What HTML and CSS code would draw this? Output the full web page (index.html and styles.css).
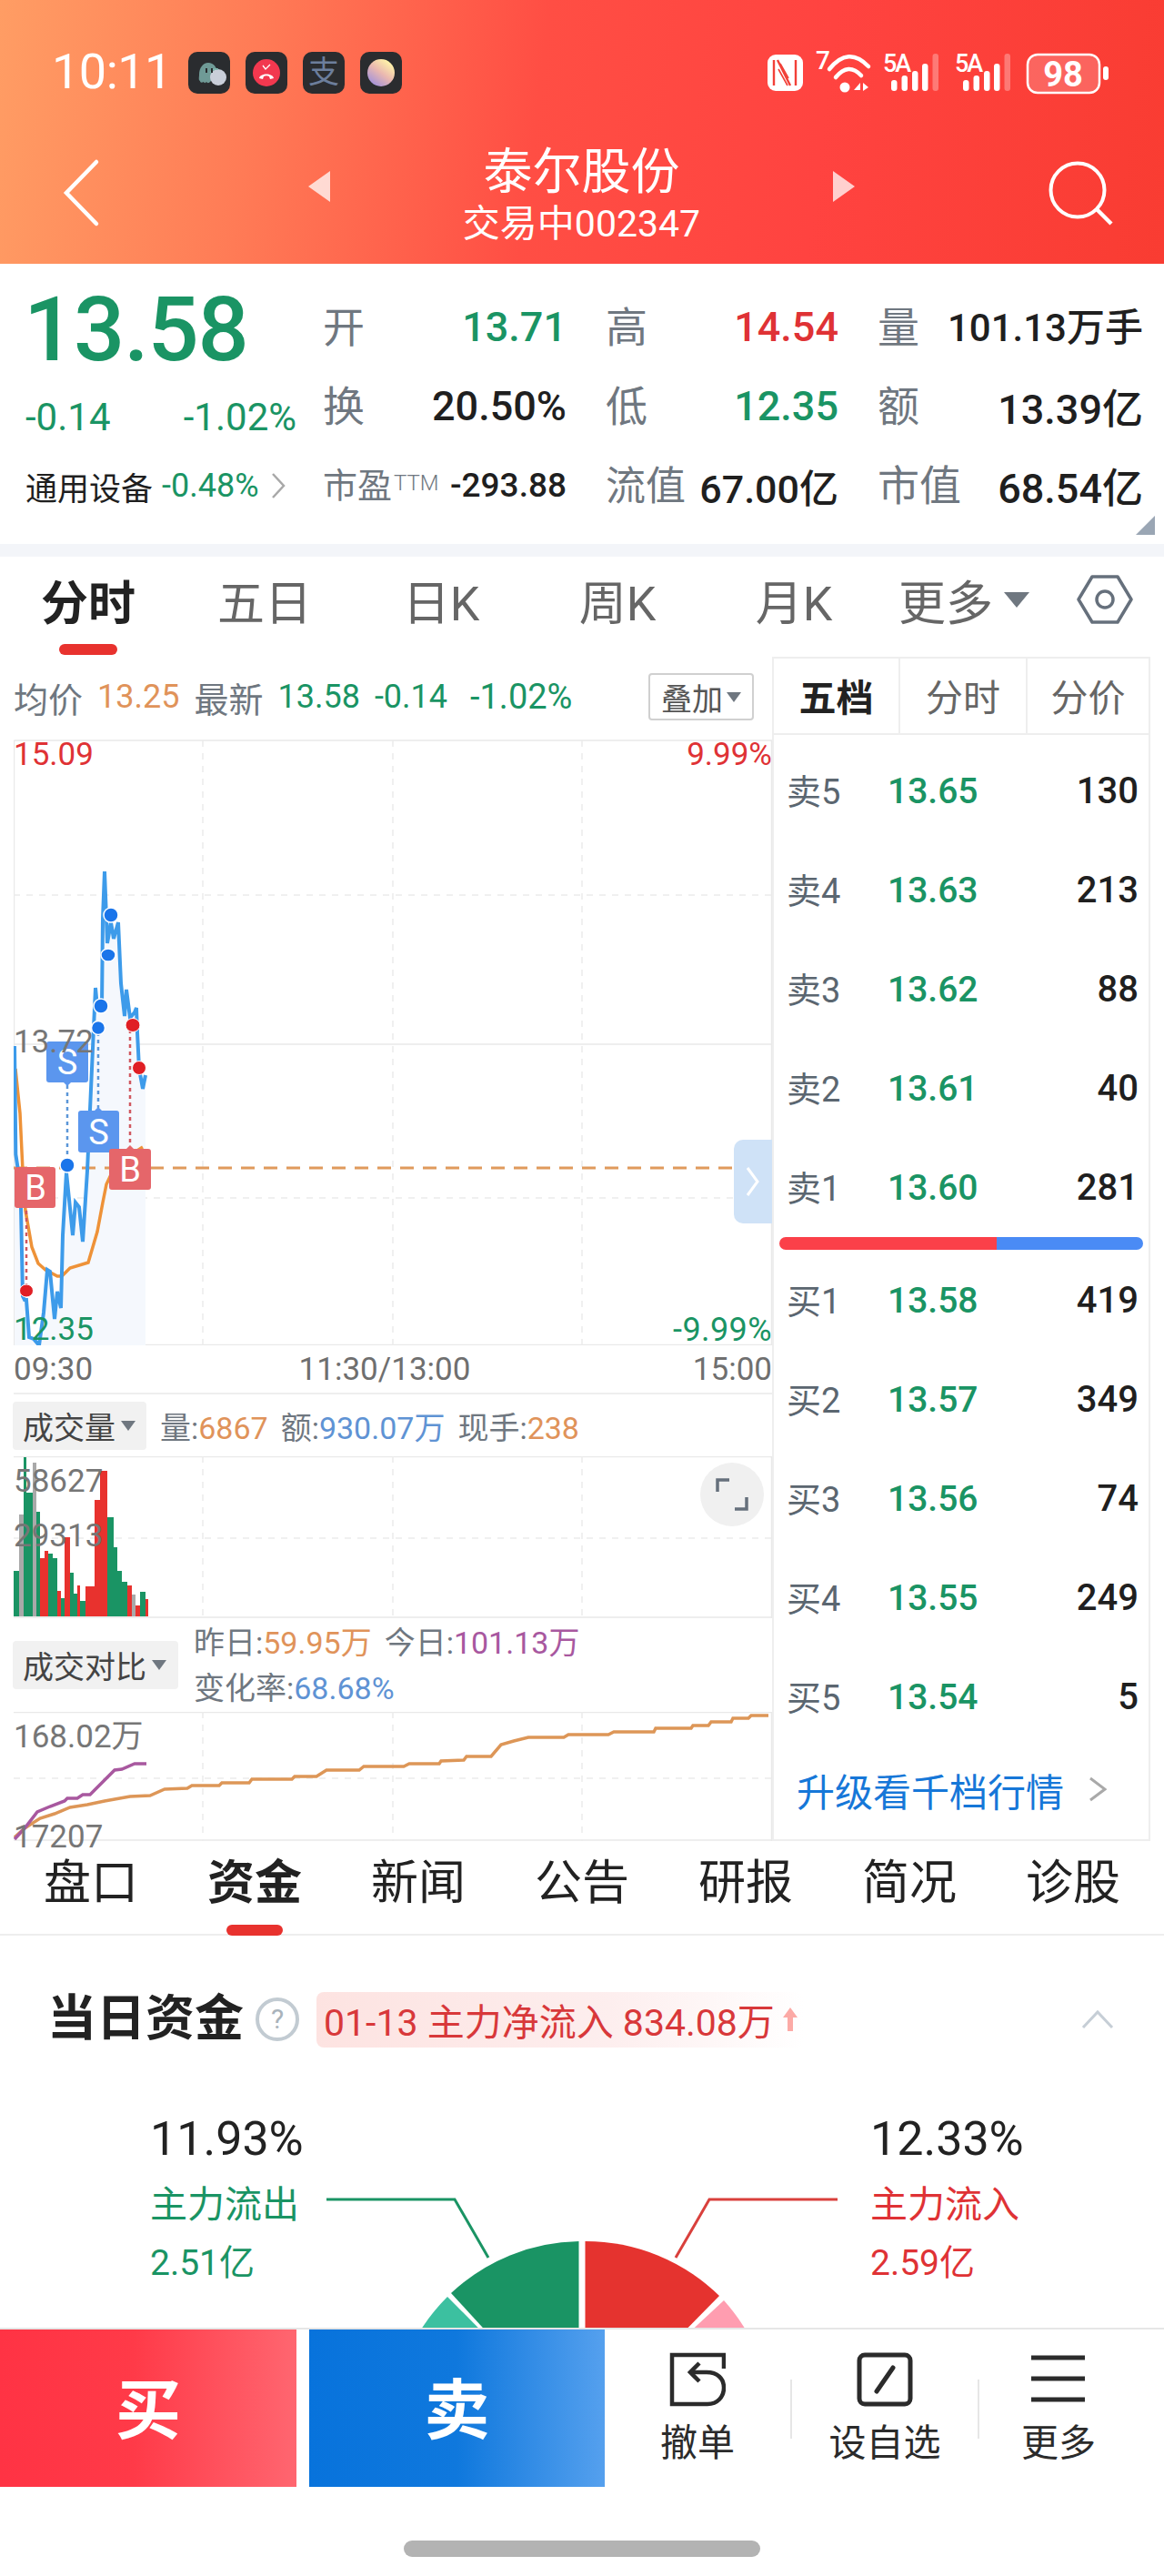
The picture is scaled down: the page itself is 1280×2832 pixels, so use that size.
FILE: index.html
```html
<!DOCTYPE html>
<html lang="zh-CN">
<head>
<meta charset="utf-8">
<title>泰尔股份</title>
<link rel="stylesheet" href="styles.css">
</head>
<body>
<div class="app">
  <header class="top">
    <div class="status">
      <span class="clock">10:11</span>
      <div class="notif">
        <span class="app-icon">
          <svg viewBox="0 0 46 46" width="46" height="46"><path d="M24 33c-2 2-3 1-4 0-1 1-2 2-3 0-2 1-4 1-4-1-2-1-1-4-1-7 0-7 4-13 10-13s10 5 10 12z" fill="#6f9a96"/><circle cx="33" cy="28" r="9" fill="#c9ced9"/><path d="M24 23a9 9 0 0 1 9-4" fill="none" stroke="#7fb8ae" stroke-width="1.5"/><rect x="19" y="18" width="2" height="5" fill="#2a2c2f"/><rect x="25" y="18" width="2" height="5" fill="#2a2c2f"/></svg>
        </span>
        <span class="app-icon">
          <svg viewBox="0 0 46 46" width="46" height="46"><circle cx="23" cy="23" r="15" fill="#f2384f"/><path d="M15 29c1-6 15-6 16 0l-4 1-1-3c-2-1-4-1-6 0l-1 3z" fill="#fff"/><path d="M19 15l3 4 5-5" fill="none" stroke="#fff" stroke-width="1.3"/></svg>
        </span>
        <span class="app-icon app-zhi">支</span>
        <span class="app-icon">
          <svg viewBox="0 0 46 46" width="46" height="46"><defs><linearGradient id="orb" x1="0.2" y1="0.9" x2="0.8" y2="0.1"><stop offset="0" stop-color="#a794d8"/><stop offset="0.5" stop-color="#eab8b0"/><stop offset="1" stop-color="#fff3a8"/></linearGradient></defs><circle cx="23" cy="23" r="15" fill="url(#orb)"/></svg>
        </span>
      </div>
      <svg class="sys" viewBox="840 50 385 60" width="385" height="60">
        <rect x="844" y="60" width="39" height="40" rx="9" fill="#fff"/>
        <path d="M851 66v28M875 66v28M855 66l14 28" fill="none" stroke="#f24038" stroke-width="2.4"/>
        <path d="M856 76l10 18M858 70l9 16" fill="none" stroke="#f24038" stroke-width="1.6"/>
        <text x="897" y="76" class="sys-t sys-7">7</text>
        <path d="M912 76Q933 50 955 73M919 85Q933 68 947 83" fill="none" stroke="#fff" stroke-width="4.5" stroke-linecap="round"/>
        <circle cx="929" cy="96" r="5.5" fill="#fff"/>
        <path d="M946 91l-7 8h7zM949 91v9l6-4z" fill="#fff"/>
        <text x="971" y="79" class="sys-t">5A</text>
        <rect x="980" y="88" width="6.5" height="12" rx="3" fill="#fff"/>
        <rect x="991.5" y="83" width="6.5" height="17" rx="3" fill="#fff"/>
        <rect x="1003" y="78" width="6.5" height="22" rx="3" fill="#fff"/>
        <rect x="1014" y="70" width="6.5" height="30" rx="3" fill="#fff"/>
        <rect x="1025.500" y="59" width="6.500" height="41" rx="3" fill="#fff" fill-opacity=".3"/>
        <g transform="translate(79 0)">
          <text x="971" y="79" class="sys-t">5A</text>
          <rect x="980" y="88" width="6.5" height="12" rx="3" fill="#fff"/>
          <rect x="991.5" y="83" width="6.5" height="17" rx="3" fill="#fff"/>
          <rect x="1003" y="78" width="6.5" height="22" rx="3" fill="#fff"/>
          <rect x="1014" y="70" width="6.5" height="30" rx="3" fill="#fff"/>
          <rect x="1025.500" y="59" width="6.500" height="41" rx="3" fill="#fff" fill-opacity=".3"/>
        </g>
        <rect x="1130" y="60" width="79" height="42" rx="11" fill="#fff" fill-opacity=".2" stroke="#fff" stroke-width="2.5"/>
        <text x="1169" y="95" class="sys-batt" text-anchor="middle">98</text>
        <rect x="1213" y="73" width="6" height="15" rx="3" fill="#fff"/>
      </svg>
    </div>
    <nav class="nav">
      <div class="nav-back">
        <svg viewBox="0 0 44 76" width="44" height="76"><path d="M37 4L4 38l33 34" fill="none" stroke="#fff" stroke-width="4.500" stroke-linecap="round" stroke-linejoin="miter"/></svg>
      </div>
      <svg class="tri" viewBox="0 0 24 34" width="24" height="34"><path d="M24 0v34L0 17z" fill="#fff" fill-opacity=".75"/></svg>
      <div class="nav-title">
        <span class="nav-name">泰尔股份</span>
        <span class="nav-code">交易中002347</span>
      </div>
      <svg class="tri" viewBox="0 0 24 34" width="24" height="34"><path d="M0 0v34l24-17z" fill="#fff" fill-opacity=".75"/></svg>
      <div class="nav-search">
        <svg viewBox="0 0 72 72" width="72" height="72"><circle cx="32" cy="32" r="29.500" fill="none" stroke="#fff" stroke-width="4"/><path d="M53 53l16 16" stroke="#fff" stroke-width="4.500" stroke-linecap="butt"/></svg>
      </div>
    </nav>
  </header>

  <section class="quote">
    <div class="q-left">
      <div class="q-price">13.58</div>
      <div class="q-change"><span>-0.14</span><span>-1.02%</span></div>
      <div class="q-ind"><span class="q-ind-name">通用设备</span><span class="q-ind-pct">-0.48%</span>
        <svg viewBox="0 0 18 30" width="18" height="30"><path d="M3 2l12 13L3 28" fill="none" stroke="#a8a8a8" stroke-width="2.500"/></svg>
      </div>
    </div>
    <div class="q-grid">
      <div class="q-cell"><span class="lbl">开</span><span class="val green">13.71</span></div>
      <div class="q-cell"><span class="lbl">高</span><span class="val red">14.54</span></div>
      <div class="q-cell"><span class="lbl">量</span><span class="val val-sm">101.13万手</span></div>
      <div class="q-cell"><span class="lbl">换</span><span class="val">20.50%</span></div>
      <div class="q-cell"><span class="lbl">低</span><span class="val green">12.35</span></div>
      <div class="q-cell"><span class="lbl">额</span><span class="val">13.39亿</span></div>
      <div class="q-cell"><span class="lbl lbl-sm">市盈<sup class="ttm">TTM</sup></span><span class="val val-xs">-293.88</span></div>
      <div class="q-cell"><span class="lbl lbl-md">流值</span><span class="val val-md">67.00亿</span></div>
      <div class="q-cell"><span class="lbl">市值</span><span class="val">68.54亿</span></div>
    </div>
    <svg class="q-corner" viewBox="0 0 21 21" width="21" height="21"><path d="M21 0v21H0z" fill="#9aa6b4"/></svg>
  </section>

  <div class="tabs">
    <span class="tab tab-on">分时</span>
    <span class="tab">五日</span>
    <span class="tab">日K</span>
    <span class="tab">周K</span>
    <span class="tab">月K</span>
    <span class="tab tab-more">更多<i class="caret"></i></span>
    <span class="tab">
      <svg viewBox="0 0 62 56" width="62" height="56"><path d="M17 3h28l15 25-15 25H17L2 28z" fill="none" stroke="#66707c" stroke-width="3.500" stroke-linejoin="round"/><circle cx="31" cy="28" r="9" fill="none" stroke="#66707c" stroke-width="3.500"/></svg>
    </span>
  </div>

  <div class="market">
    <div class="m-left">
      <div class="info">
        <span class="c-lbl">均价</span><span class="c-org info-num">13.25</span>
        <span class="c-lbl">最新</span><span class="green info-num">13.58</span>
        <span class="green info-num">-0.14</span><span class="green info-pct">-1.02%</span>
        <span class="overlay">叠加<i class="caret caret-sm"></i></span>
      </div>

      <div class="chart">
        <svg class="chart-svg" viewBox="15 812 834 667" width="834" height="667">
          <path d="M15.500 814H849M15.500 814V1479M15 1478.500H849M848.500 814V1479M15 1148H849" fill="none" stroke="#e9e9e9" stroke-width="1.500"/>
          <path d="M223 814V1479M432 814V1479M640 814V1479M15 984H849M15 1317H849" fill="none" stroke="#ececec" stroke-width="1.500" stroke-dasharray="7 7"/>
          <path d="M16 1150L17.300 1269 20 1287 23 1327 25 1425 27 1429 29 1429 32 1470 37 1472 43 1479 48 1443 52 1396 55 1398 60 1450 63 1420 67 1438 69 1358 73 1289 80 1358 83 1322 87 1327 91 1365 96 1287 99 1220 103 1130 105 1086 107 1108 112 1106 113 1010 115 958 117 1010 118 1037 122 1014 125 1032 130 1014 133 1081 137 1117 139 1088 143 1119 148 1113 150 1108 151 1135 153 1175 157 1197 160 1182V1479H16z" fill="#f5f8fd"/>
          <path d="M15 1284H849" stroke="#e09a5c" stroke-width="3" stroke-dasharray="15 10"/>
          <polyline points="17,1175 22,1224 25,1287 28,1331 35,1371 42,1389 50,1396 63,1403 68,1403 77,1394 97,1388 107,1354 113,1322 117,1302 125,1285 140,1272 157,1261" fill="none" stroke="#ee9238" stroke-width="3.500"/>
          <polyline points="16,1150 17.300,1269 20,1287 23,1327 25,1425 27,1429 29,1429 32,1470 37,1472 43,1479 48,1443 52,1396 55,1398 60,1450 63,1420 67,1438 69,1358 73,1289 80,1358 83,1322 87,1327 91,1365 96,1287 99,1220 103,1130 105,1086 107,1108 112,1106 113,1010 115,958 117,1010 118,1037 122,1014 125,1032 130,1014 133,1081 137,1117 139,1088 143,1119 148,1113 150,1108 151,1135 153,1175 157,1197 160,1182" fill="none" stroke="#3d9bea" stroke-width="4"/>
          <path d="M74 1193V1275M108 1135V1218" stroke="#5b96d8" stroke-width="2.500" stroke-dasharray="4 4"/>
          <path d="M143 1132V1260M29 1331V1412" stroke="#d0575f" stroke-width="2.500" stroke-dasharray="4 4"/>
          <g fill="#1a75ea" stroke="#fff" stroke-width="1.500">
            <ellipse cx="122" cy="1006" rx="8" ry="8"/><ellipse cx="119" cy="1050" rx="8" ry="7"/><ellipse cx="111" cy="1106" rx="8" ry="8"/><ellipse cx="108" cy="1130" rx="7.500" ry="7.500"/><ellipse cx="74" cy="1281" rx="8" ry="8"/>
          </g>
          <g fill="#e01f25" stroke="#fff" stroke-width="1">
            <ellipse cx="146" cy="1127" rx="8" ry="7.500"/><ellipse cx="153" cy="1174" rx="7.500" ry="7.500"/><ellipse cx="29" cy="1419" rx="7.500" ry="7"/>
          </g>
          <path d="M54 1145H94a3 3 0 0 1 3 3V1187a3 3 0 0 1-3 3H78l-4 4-4-4H54a3 3 0 0 1-3-3V1148a3 3 0 0 1 3-3z" fill="#5b96ee"/>
          <path d="M89 1221H104l4-4 4 4H128a3 3 0 0 1 3 3V1264a3 3 0 0 1-3 3H89a3 3 0 0 1-3-3V1224a3 3 0 0 1 3-3z" fill="#5b96ee"/>
          <rect x="16" y="1283" width="45" height="45" rx="3" fill="#e5666a"/>
          <path d="M123 1263H139l4-4 4 4H163a3 3 0 0 1 3 3V1305a3 3 0 0 1-3 3H123a3 3 0 0 1-3-3V1266a3 3 0 0 1 3-3z" fill="#e5666a"/>
          <text x="74" y="1181" class="sb" text-anchor="middle">S</text>
          <text x="108.500" y="1258" class="sb" text-anchor="middle">S</text>
          <text x="39" y="1319" class="sb" text-anchor="middle">B</text>
          <text x="143" y="1299" class="sb" text-anchor="middle">B</text>
        </svg>
        <span class="axis ax-l ax-top red">15.09</span>
        <span class="axis ax-r ax-top red">9.99%</span>
        <span class="axis ax-l ax-mid c-grey">13.72</span>
        <span class="axis ax-l ax-bot green">12.35</span>
        <span class="axis ax-r ax-bot green ax-wide">-9.99%</span>
        <span class="handle"><svg viewBox="0 0 18 36" width="18" height="36"><path d="M3 3l11 15L3 33" fill="none" stroke="#fff" stroke-width="3"/></svg></span>
      </div>

      <div class="time"><span>09:30</span><span class="time-mid">11:30/13:00</span><span>15:00</span></div>

      <div class="sub-head">
        <span class="pick pick-a">成交量<i class="caret caret-sm"></i></span>
        <span class="sub-items">
          <span><b class="c-lbl">量:</b><b class="c-org">6867</b></span>
          <span><b class="c-lbl">额:</b><b class="c-blue">930.07万</b></span>
          <span><b class="c-lbl">现手:</b><b class="c-org">238</b></span>
        </span>
      </div>

      <div class="vol">
        <svg class="chart-svg" viewBox="15 1601 834 178" width="834" height="178">
          <path d="M15 1601.500H849M15 1778H849M848.500 1601V1779" fill="none" stroke="#e9e9e9" stroke-width="1.500"/>
          <path d="M223 1601V1779M432 1601V1779M640 1601V1779M15 1691H849" stroke="#ececec" stroke-width="1.500" stroke-dasharray="7 7"/>
          <g fill="#1a9464">
            <rect x="15" y="1727" width="6" height="50"/><rect x="26" y="1602" width="3" height="175"/><rect x="29" y="1641" width="7" height="136"/><rect x="40" y="1662" width="4" height="115"/><rect x="53" y="1708" width="5" height="69"/><rect x="58" y="1713" width="5" height="64"/><rect x="67" y="1757" width="4" height="20"/><rect x="77" y="1729" width="4" height="48"/><rect x="81" y="1752" width="4" height="25"/><rect x="88" y="1760" width="6" height="17"/><rect x="118" y="1668" width="7" height="109"/><rect x="125" y="1701" width="4" height="76"/><rect x="129" y="1727" width="5" height="50"/><rect x="134" y="1739" width="6" height="38"/><rect x="154" y="1750" width="6" height="27"/>
          </g>
          <g fill="#e8322e">
            <rect x="44" y="1713" width="5" height="64"/><rect x="49" y="1705" width="4" height="72"/><rect x="63" y="1749" width="4" height="28"/><rect x="71" y="1690" width="6" height="87"/><rect x="85" y="1743" width="3" height="34"/><rect x="94" y="1744" width="10" height="33"/><rect x="104" y="1649" width="6" height="128"/><rect x="110" y="1617" width="8" height="160"/><rect x="140" y="1743" width="5" height="34"/><rect x="149" y="1765" width="5" height="12"/><rect x="160" y="1758" width="3" height="19"/>
          </g>
          <g fill="#a9a9a9">
            <rect x="21" y="1665" width="5" height="112"/><rect x="36" y="1608" width="4" height="169"/><rect x="145" y="1753" width="4" height="24"/>
          </g>
        </svg>
        <span class="axis ax-l vol-a c-grey">58627</span>
        <span class="axis ax-l vol-b c-grey">29313</span>
        <span class="expand"><svg viewBox="0 0 36 36" width="36" height="36"><path d="M2 15V2h13M34 21v13H21" fill="none" stroke="#66707c" stroke-width="3.500"/></svg></span>
      </div>

      <div class="sub-head sub-tall">
        <span class="pick pick-b">成交对比<i class="caret caret-sm"></i></span>
        <span class="sub-lines">
          <span class="sub-items">
            <span><b class="c-lbl">昨日:</b><b class="c-org">59.95万</b></span>
            <span><b class="c-lbl">今日:</b><b class="c-pur">101.13万</b></span>
          </span>
          <span><b class="c-lbl">变化率:</b><b class="c-blue">68.68%</b></span>
        </span>
      </div>

      <div class="cmp">
        <svg class="chart-svg" viewBox="15 1882 834 142" width="834" height="142">
          <path d="M15 1882.500H849M848.500 1882V2024M15 2023H849" fill="none" stroke="#e9e9e9" stroke-width="1.500"/>
          <path d="M223 1882V2024M432 1882V2024M640 1882V2024M15 1955H849" stroke="#ececec" stroke-width="1.500" stroke-dasharray="7 7"/>
          <polyline points="16,2020 27,2010 44,1999 60,1994 77,1987 96,1984 115,1980 143,1975 165,1974 181,1967 206,1966 211,1963 241,1963 244,1960 274,1960 277,1956 321,1956 324,1953 348,1953 359,1946 395,1946 400,1942 444,1942 450,1939 483,1939 485,1936 510,1935 513,1931 540,1931 551,1918 565,1914 581,1910 620,1910 625,1907 669,1907 675,1904 719,1904 721,1900 760,1900 762,1897 779,1897 782,1893 804,1893 806,1889 823,1889 826,1886 845,1886" fill="none" stroke="#dd9657" stroke-width="3.500"/>
          <polyline points="16,2022 27,2010 41,1992 55,1986 71,1980 74,1977 85,1977 91,1973 99,1973 126,1946 134,1945 148,1939 161,1939" fill="none" stroke="#a8589f" stroke-width="3.500"/>
        </svg>
        <span class="axis ax-l cmp-a c-grey">168.02万</span>
        <span class="axis ax-l cmp-b c-grey">17207</span>
      </div>
    </div>

    <aside class="book">
      <div class="book-tabs">
        <span class="bt bt-on">五档</span><span class="bt">分时</span><span class="bt">分价</span>
      </div>
      <div class="book-rows">
        <div class="br"><span class="br-l">卖5</span><span class="br-p">13.65</span><span class="br-q">130</span></div>
        <div class="br"><span class="br-l">卖4</span><span class="br-p">13.63</span><span class="br-q">213</span></div>
        <div class="br"><span class="br-l">卖3</span><span class="br-p">13.62</span><span class="br-q">88</span></div>
        <div class="br"><span class="br-l">卖2</span><span class="br-p">13.61</span><span class="br-q">40</span></div>
        <div class="br"><span class="br-l">卖1</span><span class="br-p">13.60</span><span class="br-q">281</span></div>
      </div>
      <div class="ratio"><span class="ratio-buy"></span><span class="ratio-sell"></span></div>
      <div class="book-rows book-buy">
        <div class="br"><span class="br-l">买1</span><span class="br-p">13.58</span><span class="br-q">419</span></div>
        <div class="br"><span class="br-l">买2</span><span class="br-p">13.57</span><span class="br-q">349</span></div>
        <div class="br"><span class="br-l">买3</span><span class="br-p">13.56</span><span class="br-q">74</span></div>
        <div class="br"><span class="br-l">买4</span><span class="br-p">13.55</span><span class="br-q">249</span></div>
        <div class="br"><span class="br-l">买5</span><span class="br-p">13.54</span><span class="br-q">5</span></div>
      </div>
      <div class="upgrade"><span>升级看千档行情</span>
        <svg viewBox="0 0 20 30" width="20" height="30"><path d="M2 3l16 12L2 27" fill="none" stroke="#a9a9a9" stroke-width="3"/></svg>
      </div>
    </aside>
  </div>

  <div class="tabs2">
    <span class="t2">盘口</span><span class="t2 t2-on">资金</span><span class="t2">新闻</span><span class="t2">公告</span><span class="t2">研报</span><span class="t2">简况</span><span class="t2">诊股</span>
  </div>

  <section class="funds">
    <div class="f-head">
      <h2 class="f-title">当日资金</h2>
      <span class="f-help">?</span>
      <span class="f-pill">01-13 主力净流入 834.08万<svg viewBox="0 0 18 28" width="18" height="28"><path d="M9 1l8 11h-5v15H6V12H1z" fill="#fcaaa6"/></svg></span>
      <svg class="f-fold" viewBox="0 0 36 22" width="36" height="22"><path d="M2 20L18 3l16 17" fill="none" stroke="#c6ced6" stroke-width="3"/></svg>
    </div>
    <div class="f-body">
      <div class="f-side">
        <div class="f-pct">11.93%</div>
        <div class="f-name green">主力流出</div>
        <div class="f-amt green">2.51亿</div>
      </div>
      <svg class="pie" viewBox="340 2400 600 170" width="600" height="170">
        <path d="M359 2416H500L537 2480" fill="none" stroke="#1a9464" stroke-width="3"/>
        <path d="M921 2416H780L743 2480" fill="none" stroke="#d9403c" stroke-width="3"/>
        <path d="M636.500 2672V2462A210 210 0 0 0 496 2519z" fill="#1a9464"/>
        <path d="M643.500 2672V2462A210 210 0 0 1 791 2522z" fill="#e5332f"/>
        <path d="M492 2523A210 210 0 0 0 430 2672H640z" fill="#3cc0a0"/>
        <path d="M796 2527A210 210 0 0 1 850 2672H640z" fill="#ff9db0"/>
      </svg>
      <div class="f-side">
        <div class="f-pct">12.33%</div>
        <div class="f-name red">主力流入</div>
        <div class="f-amt red">2.59亿</div>
      </div>
    </div>
  </section>

  <div class="actions">
    <button class="trade buy">买</button>
    <button class="trade sell">卖</button>
    <div class="act act-1">
      <svg viewBox="0 0 62 60" width="62" height="60"><path d="M60 18V3H3V57H42C53 57 60 49 60 39S53 22 41 22H26" fill="none" stroke="#2b2b2b" stroke-width="4.500"/><path d="M33 12L23 22l10 10" fill="none" stroke="#2b2b2b" stroke-width="4.500"/></svg>
      <span>撤单</span>
    </div>
    <i class="act-sep"></i>
    <div class="act act-2">
      <svg viewBox="0 0 62 60" width="62" height="60"><rect x="3" y="3" width="56" height="54" rx="6" fill="none" stroke="#2b2b2b" stroke-width="5"/><path d="M40 17L22 43" stroke="#2b2b2b" stroke-width="5" stroke-linecap="round"/></svg>
      <span>设自选</span>
    </div>
    <i class="act-sep"></i>
    <div class="act act-3">
      <svg viewBox="0 0 62 60" width="62" height="60"><path d="M1 6H60M1 29H60M1 52H60" stroke="#2b2b2b" stroke-width="5"/></svg>
      <span>更多</span>
    </div>
  </div>

  <div class="foot"><span class="home"></span></div>
</div>
</body>
</html>
```
FILE: styles.css
```css
* { box-sizing: border-box; }
html, body { margin: 0; padding: 0; background: #fff; }
body { font-family: Roboto, "Noto Sans CJK SC", sans-serif; color: #1f1f1f; }
b, i { font-style: normal; font-weight: inherit; }
.app { width: 1280px; height: 2832px; overflow: hidden; display: flex; flex-direction: column; }
.green { color: #1a9464; }
.red { color: #df3235; }
.c-lbl { color: #6f7780; }
.c-grey { color: #767676; }
.c-org { color: #e0935a; }
.c-blue { color: #5f93d4; }
.c-pur { color: #a8589f; }

/* header */
.top { height: 290px; flex: none; color: #fff; background: linear-gradient(97deg, #ff9d64 0%, #ff7b56 22%, #ff4e44 46%, #ff4340 70%, #f93c32 100%); }
.status { height: 160px; padding-top: 49px; display: flex; align-items: flex-start; position: relative; }
.clock { margin: 0 0 0 57px; width: 150px; font-size: 54px; line-height: 60px; letter-spacing: -.5px; }
.notif { display: flex; gap: 17px; margin-top: 8px; }
.app-icon { width: 46px; height: 46px; border-radius: 10px; background: #2a2c2f; display: block; overflow: hidden; }
.app-icon svg { display: block; }
.app-zhi { color: #6c7e9c; font-size: 34px; line-height: 44px; text-align: center; }
.sys { margin: 1px 55px 0 auto; display: block; }
.sys-t { fill: #fff; font: 500 27px Roboto, sans-serif; letter-spacing: -2px; }
.sys-7 { font-size: 28px; letter-spacing: 0; }
.sys-batt { fill: #fff; font: 700 38px Roboto, sans-serif; }
.nav { height: 130px; display: grid; grid-template-columns: 339px 24px 1fr 24px 340px; grid-template-rows: 90px; align-items: center; }
.nav-back { padding: 0 0 0 69px; height: 76px; margin-top: 14px; }
.nav-back svg { display: block; }
.tri { display: block; }
.nav-title { display: flex; flex-direction: column; align-items: center; margin-top: 16px; }
.nav-name { font-size: 54px; line-height: 66px; }
.nav-code { font-size: 41px; line-height: 46px; }
.nav-search { display: flex; justify-content: flex-end; padding-right: 55px; margin-top: 16px; }
.nav-search svg { display: block; }

/* quote */
.quote { height: 322px; flex: none; padding: 25px 25px 0 28px; display: flex; border-bottom: 14px solid #f3f5f9; position: relative; }
.q-left { width: 327px; flex: none; }
.q-price { height: 94px; margin-left: -2px; font-size: 99px; line-height: 94px; font-weight: 500; color: #1a9464; letter-spacing: -1.2px; }
.q-change { height: 98px; width: 298px; display: flex; justify-content: space-between; align-items: center; color: #1a9464; font-size: 42px; }
.q-ind { height: 54px; display: flex; align-items: center; font-size: 35px; white-space: nowrap; }
.q-ind-pct { color: #1a9464; margin-left: 10px; font-size: 36px; }
.q-ind svg { margin-left: 12px; flex: none; }
.q-grid { width: 900px; display: grid; grid-template-columns: 268px 256px 292px; column-gap: 43px; grid-auto-rows: 87px; }
.q-cell { display: flex; justify-content: space-between; align-items: center; white-space: nowrap; }
.lbl { font-size: 46px; color: #6f7780; margin-bottom: 6px; }
.lbl-md { font-size: 44px; margin-bottom: 4px; }
.lbl-sm { font-size: 38px; margin-bottom: 4px; position: relative; }
.ttm { font-size: 24px; position: relative; top: -8px; vertical-align: baseline; line-height: 0; font-weight: 300; margin-left: 2px; }
.val { font-size: 45px; font-weight: 500; color: #1f1f1f; margin-top: 2px; }
.val.green { color: #1a9464; }
.val.red { color: #df3235; }
.val-sm { font-size: 42px; margin-top: -4px; }
.val-md { font-size: 43px; }
.val-xs { font-size: 37px; }
.q-corner { position: absolute; right: 10px; bottom: 10px; display: block; }

/* tabs */
.tabs { height: 108px; flex: none; display: grid; grid-template-columns: repeat(5, 194px) 180px 1fr; align-items: center; }
.tab { font-size: 52px; color: #666; height: 108px; padding-bottom: 14px; display: flex; justify-content: center; align-items: center; position: relative; }
.tab-on { color: #222; font-weight: 700; }
.tab-on::after { content: ""; position: absolute; left: 65px; right: 65px; bottom: 0; height: 12px; border-radius: 6px; background: #e8322e; }
.caret { display: inline-block; width: 0; height: 0; border-left: 14px solid transparent; border-right: 14px solid transparent; border-top: 17px solid #6f7780; margin-left: 12px; }
.caret-sm { border-left-width: 8px; border-right-width: 8px; border-top-width: 11px; margin-left: 6px; }

/* market */
.market { height: 1304px; flex: none; padding-left: 15px; display: flex; }
.m-left { width: 834px; flex: none; display: flex; flex-direction: column; }
.info { height: 92px; flex: none; display: flex; align-items: center; gap: 16px; font-size: 38px; padding: 0 20px 0 0; white-space: nowrap; }
.info-num { font-size: 36px; }
.info-pct { margin-left: 9px; }
.overlay { margin-left: auto; width: 116px; height: 52px; border: 2px solid #d0d0d0; border-radius: 4px; display: flex; align-items: center; justify-content: center; font-size: 34px; color: #555; }
.overlay .caret-sm { margin-left: 4px; }
.chart { height: 667px; flex: none; position: relative; }
.chart-svg { display: block; }
.sb { fill: #fff; font: 400 38px Roboto, sans-serif; }
.axis { position: absolute; font-size: 35px; line-height: 40px; white-space: nowrap; }
.ax-l { left: 0; }
.ax-r { right: 0; }
.ax-wide { font-size: 36px; letter-spacing: .4px; }
.ax-top { top: -2px; }
.ax-mid { top: 314px; }
.ax-bot { top: 630px; }
.handle { position: absolute; right: 0; top: 441px; width: 42px; height: 92px; background: #cfe2f7; border-radius: 10px 0 0 10px; display: flex; align-items: center; justify-content: center; }
.handle svg { display: block; }
.time { height: 54px; flex: none; display: flex; justify-content: space-between; align-items: center; font-size: 35px; color: #6f6f6f; border-bottom: 2px solid #eee; }
.time-mid { margin-right: 18px; }
.sub-head { height: 68px; flex: none; display: flex; align-items: center; font-size: 34px; white-space: nowrap; }
.sub-items { display: flex; gap: 14px; }
.sub-head > .sub-items { margin-left: 15px; }
.pick { height: 53px; background: #f1f1f1; border-radius: 4px; display: flex; align-items: center; padding-left: 11px; color: #444; flex: none; margin-left: -1px; }
.pick-a { width: 147px; }
.pick-b { width: 182px; }
.vol { height: 178px; flex: none; position: relative; }
.vol-a { top: 8px; }
.vol-b { top: 68px; }
.expand { position: absolute; right: 9px; top: 7px; width: 70px; height: 70px; border-radius: 50%; background: #f0f0f0; display: flex; align-items: center; justify-content: center; }
.expand svg { display: block; }
.sub-tall { height: 103px; }
.sub-lines { display: flex; flex-direction: column; margin-left: 17px; line-height: 50px; }
.cmp { height: 142px; flex: none; position: relative; }
.cmp-a { top: 8px; }
.cmp-b { top: 118px; }

/* order book */
.book { width: 416px; flex: none; height: 1302px; margin-top: 2px; border: 2px solid #eee; border-top: 0; display: flex; flex-direction: column; }
.book-tabs { height: 86px; flex: none; display: grid; grid-template-columns: 137px 140px 1fr; border-bottom: 2px solid #eee; border-top: 2px solid #eee; }
.bt { font-size: 41px; color: #666; padding-bottom: 3px; display: flex; align-items: center; justify-content: center; border-left: 2px solid #eee; }
.bt:first-child { border-left: 0; }
.bt-on { color: #222; font-weight: 700; }
.book-rows { padding-top: 7px; flex: none; }
.book-buy { padding-top: 1px; }
.br { height: 109px; display: grid; grid-template-columns: 111px 1fr auto; align-items: center; padding: 0 11px 0 14px; font-size: 40px; font-weight: 500; }
.br-l { font-size: 38px; font-weight: 400; color: #5b6670; padding-bottom: 5px; }
.br-p { color: #1a9464; font-size: 39px; }
.ratio { height: 14px; flex: none; margin: 0 6px; display: flex; border-radius: 7px; overflow: hidden; }
.ratio-buy { width: 239px; background: #fb4049; }
.ratio-sell { flex: 1; background: #4a8bf5; }
.upgrade { height: 94px; flex: none; display: flex; align-items: center; padding-left: 25px; color: #1677d8; font-size: 42px; white-space: nowrap; }
.upgrade svg { margin-left: 27px; display: block; }

/* tabs 2 */
.tabs2 { height: 104px; flex: none; display: grid; grid-template-columns: repeat(7, 180px); padding-left: 10px; border-bottom: 2px solid #eee; }
.t2 { font-size: 52px; color: #222; display: flex; align-items: center; justify-content: center; position: relative; padding-bottom: 20px; }
.t2-on { font-weight: 700; }
.t2-on::after { content: ""; position: absolute; left: 59px; right: 59px; bottom: -2px; height: 12px; border-radius: 6px; background: #e8322e; }

/* funds */
.funds { height: 431px; flex: none; overflow: hidden; position: relative; }
.f-head { height: 122px; padding: 62px 55px 0 52px; display: flex; align-items: center; white-space: nowrap; }
.f-title { margin: 0; font-size: 54px; font-weight: 700; line-height: 60px; color: #222; }
.f-help { width: 48px; height: 48px; margin-left: 13px; border: 4px solid #c2cbd2; border-radius: 50%; color: #a9b3bb; font-size: 30px; line-height: 40px; text-align: center; flex: none; }
.f-pill { margin-left: 19px; height: 61px; padding: 0 4px 0 8px; width: 536px; flex: none; display: flex; align-items: center; gap: 8px; font-size: 41px; color: #d8383a; border-radius: 8px; background: linear-gradient(90deg, #fde3e1 0%, #fdeeee 60%, #fff 100%); }
.f-pill svg { flex: none; display: block; }
.f-fold { margin-left: auto; }
.f-body { display: flex; align-items: flex-start; position: relative; height: 309px; }
.f-side { position: absolute; top: 72px; white-space: nowrap; }
.f-side:first-child { left: 165px; }
.f-side:last-child { left: 957px; }
.f-pct { font-size: 52px; line-height: 60px; color: #222; }
.f-name { font-size: 41px; line-height: 56px; margin-top: 14px; }
.f-amt { font-size: 39px; line-height: 56px; margin-top: 8px; }
.pie { position: absolute; left: 340px; top: 152px; display: block; }

/* actions */
.actions { height: 175px; flex: none; border-top: 2px solid #e6e6e6; display: flex; background: #fff; position: relative; }
.trade { border: 0; padding: 0 0 8px; height: 173px; color: #fff; font: 700 72px "Noto Sans CJK SC", sans-serif; flex: none; }
.buy { width: 326px; background: linear-gradient(90deg, #ff3344 0%, #ff3a48 45%, #ff6670 100%); }
.sell { width: 325px; margin-left: 14px; background: linear-gradient(90deg, #0873dc 0%, #0f78dd 50%, #55a0ee 100%); }
.act { display: flex; flex-direction: column; align-items: center; padding-top: 25px; font-size: 41px; color: #2b2b2b; line-height: 50px; flex: none; }
.act svg { display: block; margin-bottom: 15px; }
.act-1 { width: 204px; }
.act-2 { width: 204px; }
.act-3 { width: 174px; }
.act-sep { width: 2px; height: 65px; margin-top: 55px; background: #e6e6e6; flex: none; }

/* foot */
.foot { flex: 1; display: flex; justify-content: center; padding-top: 59px; }
.home { width: 392px; height: 18px; border-radius: 9px; background: #b3b3b3; display: block; }
```
